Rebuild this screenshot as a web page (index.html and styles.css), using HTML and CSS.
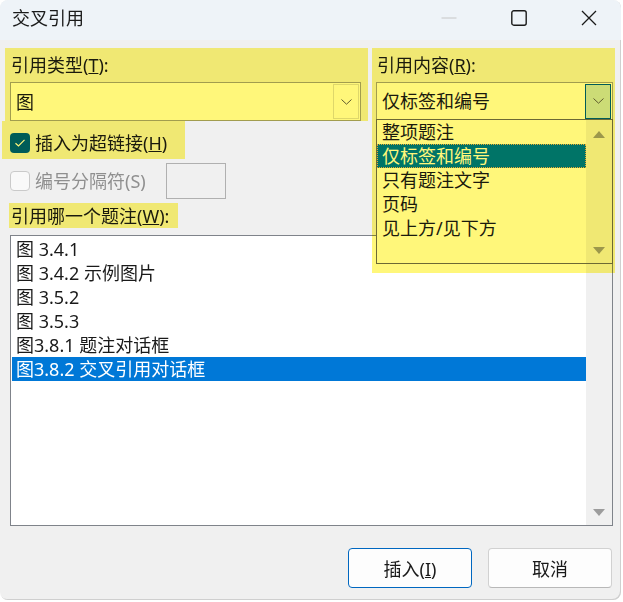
FILE: index.html
```html
<!DOCTYPE html>
<html>
<head>
  <meta charset="utf-8">
  <link rel="stylesheet" href="styles.css">
</head>
<body>
  <div class="window">
    <div class="titlebar">
      <span class="title">交叉引用</span>
      <div class="caption">
        <svg class="cap-icon" width="16" height="16" viewBox="0 0 16 16"><line x1="0.5" y1="8" x2="15.5" y2="8" stroke="#c6c6c6" stroke-width="1"/></svg>
        <svg class="cap-icon" width="16" height="16" viewBox="0 0 16 16"><rect x="0.8" y="0.8" width="14.4" height="14.4" rx="2" fill="none" stroke="#1a1a1a" stroke-width="1.4"/></svg>
        <svg class="cap-icon" width="16" height="16" viewBox="0 0 16 16"><path d="M1 1 L15 15 M15 1 L1 15" stroke="#1a1a1a" stroke-width="1.3" fill="none"/></svg>
      </div>
    </div>

    <div class="content">
      <div class="top-grid">
        <div class="col">
          <div class="field-label">引用类型(<u>T</u>):</div>
          <div class="combo combo-left">
            <span class="combo-text">图</span>
            <span class="drop-btn">
              <svg width="11" height="6" viewBox="0 0 11 6"><path d="M0.5 0.5 L5.5 5.2 L10.5 0.5" fill="none" stroke="#5f5f5f" stroke-width="1"/></svg>
            </span>
          </div>
          <div class="check-row">
            <span class="checkbox checked">
              <svg width="12" height="10" viewBox="0 0 12 10"><path d="M1.5 5.2 L4.5 8 L10.5 1.8" fill="none" stroke="#fff" stroke-width="1.2"/></svg>
            </span>
            <span>插入为超链接(<u>H</u>)</span>
          </div>
          <div class="sep-row">
            <span class="checkbox disabled"></span>
            <span class="disabled-text">编号分隔符(S)</span>
            <span class="sep-input"></span>
          </div>
          <div class="field-label label-w">引用哪一个题注(<u>W</u>):</div>
        </div>

        <div class="col">
          <div class="field-label">引用内容(<u>R</u>):</div>
          <div class="combo-wrap">
            <div class="combo combo-right">
              <span class="combo-text">仅标签和编号</span>
              <span class="drop-btn active">
                <svg width="11" height="6" viewBox="0 0 11 6"><path d="M0.5 0.5 L5.5 5.2 L10.5 0.5" fill="none" stroke="#5f5f5f" stroke-width="1"/></svg>
              </span>
            </div>
            <div class="popup">
              <div class="popup-items">
                <div class="row">整项题注</div>
                <div class="row selected focus">仅标签和编号</div>
                <div class="row">只有题注文字</div>
                <div class="row">页码</div>
                <div class="row">见上方/见下方</div>
              </div>
              <div class="scroll popup-scroll">
                <span class="arrow up"></span>
                <span class="arrow down"></span>
              </div>
            </div>
          </div>
        </div>
      </div>

      <div class="listbox">
        <div class="list-items">
          <div class="row">图 3.4.1</div>
          <div class="row">图 3.4.2 示例图片</div>
          <div class="row">图 3.5.2</div>
          <div class="row">图 3.5.3</div>
          <div class="row">图3.8.1 题注对话框</div>
          <div class="row selected">图3.8.2 交叉引用对话框</div>
        </div>
        <div class="scroll list-scroll">
          <span class="arrow up"></span>
          <span class="arrow down"></span>
        </div>
      </div>

      <div class="buttons">
        <button class="btn btn-default">插入(<u>I</u>)</button>
        <button class="btn">取消</button>
      </div>
    </div>

    <div class="marker marker-type"></div>
    <div class="marker marker-link"></div>
    <div class="marker marker-which"></div>
    <div class="marker marker-content"></div>
  </div>
</body>
</html>
```

FILE: styles.css
```css
body {
  margin: 0;
  background: #ffffff;
}

.window {
  position: relative;
  isolation: isolate;
  width: 621px;
  height: 600px;
  background: #f0f0f0;
  border-radius: 8px;
  overflow: hidden;
  box-shadow: inset -1px -1px 0 #cfcfcf;
  font-family: "Noto Sans", "Noto Sans CJK SC", sans-serif;
  font-size: 18px;
  line-height: 24px;
  color: #1a1a1a;
}

.titlebar {
  height: 40px;
  box-sizing: border-box;
  padding: 0 24px 4px 12px;
  background: #eef3f8;
  display: flex;
  align-items: center;
}

.title {
  flex: 1;
}

.caption {
  display: flex;
  gap: 54px;
}

.cap-icon {
  display: block;
}

.content {
  padding: 13px 8px 0 10px;
}

.top-grid {
  display: grid;
  grid-template-columns: 351px 237px;
  column-gap: 15px;
}

.col {
  display: flex;
  flex-direction: column;
}

.field-label {
  height: 24px;
  padding-left: 1px;
}

.combo {
  margin-top: 5px;
  box-sizing: border-box;
  border: 1px solid #a2a2a2;
  background: #ffffff;
  display: flex;
  align-items: center;
  padding-left: 5px;
}

.combo-left {
  height: 39px;
}

.combo-right {
  height: 38px;
}

.combo-text {
  flex: 1;
}

.drop-btn {
  width: 26px;
  height: 35px;
  box-sizing: border-box;
  margin-right: 1px;
  border: 1px solid #dedede;
  display: flex;
  align-items: center;
  justify-content: center;
}

.drop-btn.active {
  background: #cce4f7;
  border-color: #005fb8;
}

.combo-wrap {
  position: relative;
}

.popup {
  position: absolute;
  left: 0;
  right: 0;
  top: calc(100% - 1px);
  height: 145px;
  box-sizing: border-box;
  border: 1px solid #6c6c6c;
  background: #ffffff;
  display: flex;
  z-index: 2;
}

.popup-items {
  flex: 1;
}

.popup .row {
  height: 24px;
  padding-left: 5px;
}

.row.selected {
  background: #0078d7;
  color: #ffffff;
}

.row.focus {
  outline: 1px dotted #e8b060;
  outline-offset: -1px;
}

.scroll {
  width: 26px;
  background: #f0f0f0;
  display: flex;
  flex-direction: column;
  justify-content: space-between;
  align-items: center;
}

.popup-scroll {
  padding: 11px 0 9px;
}

.arrow {
  width: 0;
  height: 0;
  border-left: 6px solid transparent;
  border-right: 6px solid transparent;
}

.arrow.up {
  border-bottom: 7px solid #9c9c9c;
}

.arrow.down {
  border-top: 7px solid #9c9c9c;
}

.check-row {
  margin-top: 10px;
  height: 24px;
  display: flex;
  align-items: center;
  gap: 5px;
}

.checkbox {
  width: 20px;
  height: 20px;
  box-sizing: border-box;
  border-radius: 4px;
  display: flex;
  align-items: center;
  justify-content: center;
}

.checkbox.checked {
  background: #005fb8;
}

.checkbox.disabled {
  background: #f9f9f9;
  border: 1px solid #cacaca;
}

.sep-row {
  margin-top: 8px;
  height: 36px;
  display: flex;
  align-items: center;
  gap: 5px;
}

.disabled-text {
  color: #8f8f8f;
}

.sep-input {
  margin-left: 15px;
  width: 60px;
  height: 36px;
  box-sizing: border-box;
  border: 1px solid #b0b0b0;
  background: #f0f0f0;
}

.label-w {
  margin-top: 5px;
}

.listbox {
  margin-top: 7px;
  width: 603px;
  height: 291px;
  box-sizing: border-box;
  border: 1px solid #7f838a;
  background: #ffffff;
  display: flex;
}

.list-items {
  flex: 1;
  padding: 1px 0 0 1px;
}

.list-items .row {
  height: 24px;
  padding-left: 4px;
}

.list-scroll {
  padding: 11px 0 9px;
}

.buttons {
  margin-top: 22px;
  padding-right: 1px;
  display: flex;
  justify-content: flex-end;
  gap: 16px;
}

.btn {
  width: 124px;
  height: 40px;
  border: 1px solid #d1d1d1;
  border-bottom-color: #b8b8b8;
  border-radius: 4px;
  background: #fdfdfd;
  font-family: inherit;
  font-size: 18px;
  color: #1a1a1a;
  padding: 0;
}

.btn-default {
  border-color: #0067c0;
}

.marker {
  position: absolute;
  z-index: 10;
  background: #fff77a;
  mix-blend-mode: multiply;
  pointer-events: none;
}

.marker-type {
  left: 5px;
  top: 48px;
  width: 363px;
  height: 73px;
}

.marker-link {
  left: 2px;
  top: 121px;
  width: 183px;
  height: 38px;
}

.marker-which {
  left: 9px;
  top: 203px;
  width: 169px;
  height: 25px;
}

.marker-content {
  left: 372px;
  top: 48px;
  width: 243px;
  height: 225px;
}
```
